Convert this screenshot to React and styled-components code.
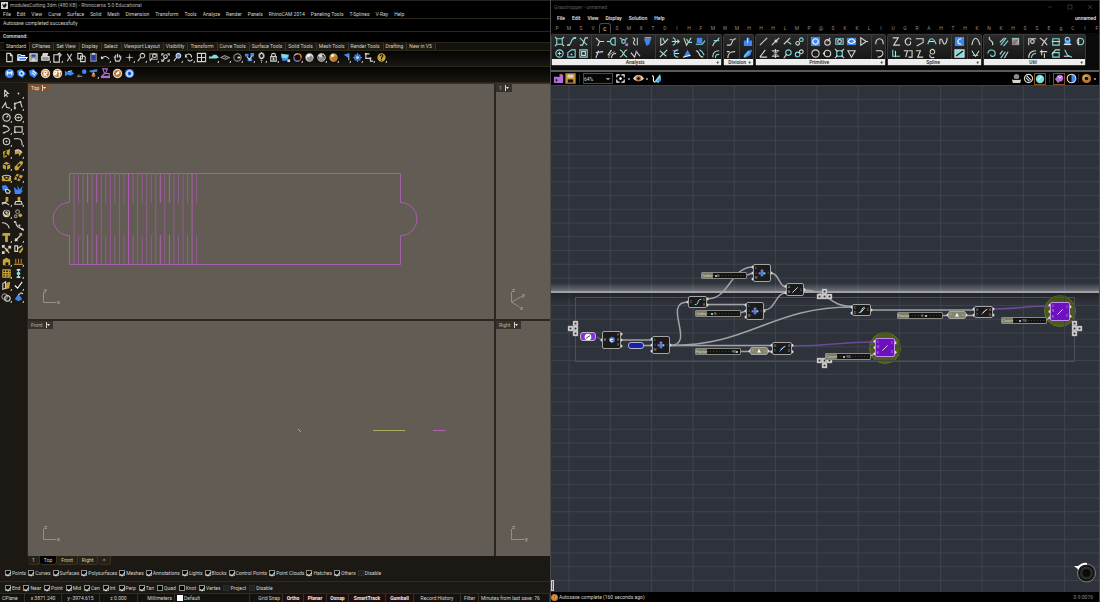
import styled, { createGlobalStyle } from "styled-components"

const GlobalStyle = createGlobalStyle`
  * { box-sizing: border-box; }
  body {
    margin: 0;
    background: #000;
    color: #d4d4d0;
    font-family: Roboto, "Open Sans", sans-serif;
    font-size: 5px;
    line-height: 8px;
  }
  button, select, input { font: inherit; color: inherit; }
  a { color: inherit; text-decoration: none; }
`

/* ---------- icons ---------- */

// first letter of every shape is its colour: lower case strokes, upper case fills
const colors = {
  w: "#d4d4d0",
  g: "#8c8c88",
  t: "#7fdede",
  b: "#3f86f0",
  n: "#2438b0",
  y: "#c8a438",
  o: "#c07838",
  p: "#b070e0",
  r: "#c8442c",
  k: "#101010",
  l: "#ffffff",
}

const o = (x, y, r) => `M${x - r} ${y}a${r} ${r} 0 1 0 ${2 * r} 0a${r} ${r} 0 1 0 ${-2 * r} 0`

const Svg = styled.svg`
  display: block;
  flex: none;
  overflow: visible;
`

function Icon({ shapes, size = 12, width = 1.2 }) {
  return (
    <Svg width={size} height={size} viewBox="0 0 12 12" aria-hidden="true">
      {shapes.map((shape, i) => {
        const code = shape[0]
        const filled = code !== code.toLowerCase()
        const color = colors[code.toLowerCase()]
        return (
          <path
            key={i}
            d={shape.slice(1)}
            fill={filled ? color : "none"}
            stroke={filled ? "none" : color}
            strokeWidth={width}
          />
        )
      })}
    </Svg>
  )
}

// little flyout mark in the lower right of a tool
const corner = "LM10 11.5h2v-2z"

const standardTools = [
  ["New", ["wM3 1.500h4l2 2.500v6.500h-6z", "wM7 1.500v2.500h2"]],
  ["Open", ["BM2 4h3l1 1h4v4h-8z", "lM2 9V3h3l1 1h4", "lM2 9l2-3h8l-2 3z"]],
  ["Save", ["GM2 2h8v8h-8z", "NM4 2h4v3h-4z", "wM2 2h8v8h-8z", "WM4 7h4v3h-4z"]],
  ["Print", ["WM3 1h6l-1 4h-6z", "GM1 5h9v4h-9z", "wM2 5h8v4h-8z", corner]],
  ["Properties", ["wM2 3h6v8h-6z", "wM6 3l2-2 2 2-2 3", corner]],
  ["Cut", ["wM3.500 2l5 8", "wM8.500 2l-5 8"]],
  ["Copy", ["wM2 1.500h4l1 1v5h-5z", "wM5 4.500h4l1 1v5h-5z"]],
  ["Paste", ["NM3 2h6v8h-6z", "gM3 2h6v8h-6z", "WM4.500 1h3v2h-3z"]],
  ["Undo", ["wM2 7c2-3 6-3 8 1", "WM1 8l0-4 3 3z", corner]],
  ["Pan", ["wM3 6l-1-1M4 6V3M6 6V2M8 6V3M9.500 7V4M3 6l1 4h4l1.500-3"]],
  ["Rotate", ["gM6 2v8M2 6h8", "WM5 5h2v2h-2z", corner]],
  ["Zoom", ["w" + o(7, 4, 2.5), "wM5 6l-3 4", corner]],
  ["Zoom window", ["gM2 2h8v6h-8z", "w" + o(7, 4, 2), "wM5 6l-3 4", corner]],
  ["Zoom extents", ["wM2 4V2h2M8 2h2v2M2 8v2h2M10 8v2h-2", "w" + o(6, 5, 2), "wM5 7l-2 3"]],
  ["Zoom selected", ["B" + o(7, 4, 3), "w" + o(7, 4, 2.5), "wM5 6l-3 4", corner]],
  ["Undo view", ["wM2 4c2-3 7-2 6 2M4 8c1 3 5 2 5 0", "WM1 2v4h3z", corner]],
  ["Viewports", ["wM1.500 1.500h9v9h-9zM6 1.500v9M1.500 6h9"]],
  ["Set view", ["TM1 5h3l2-2h3l3 3-3 1h-8z", corner]],
  ["CPlane", ["gM1 6l4-2 5 2-4 2z", "R" + o(6, 6, 1), corner]],
  ["Circle", ["g" + o(6, 6, 4), "WM6 5h3v2h-3z", corner]],
  ["Object snap", ["BM1 2h4v3h-4zM7 1h4v4h-4zM4 7h5v3h-5z", "wM3 5l4 4M9 4l-3 4", corner]],
  ["Light", ["g" + o(6, 4, 3), "wM4 3l2-2 2 2v2l-1 2h-2l-1-2zM5 9h2M5.500 11h1", corner]],
  ["Lock", ["wM4 5V3c0-2 4-2 4 0v2", "wM3 5h6v5h-6z", "WM5 6h2v3h-2z", corner]],
  ["Layers", ["BM1 5l9-1-2 5-5 1z", "TM1 2l9 1-3 4-5-1z", "WM8 8h3v3h-3z"]],
  ["Color wheel", ["r" + o(6, 6, 4), "bM2 6a4 4 0 0 0 6 3.500", "tM2.500 4a4 4 0 0 1 4-2", "yM7 2a4 4 0 0 1 3 4", corner]],
  ["Shade", ["W" + o(6, 6, 4.5), "G" + o(6.5, 7, 3), "L" + o(5, 4, 1.5)]],
  ["Render preview", ["w" + o(6, 6, 4), "G" + o(6, 7, 3), "W" + o(5, 4, 2), corner]],
  ["Render", ["Y" + o(6, 6, 4.5), "O" + o(7, 7, 3), "L" + o(5, 4, 1.5), corner]],
  ["Camera", ["BM4 3l6-2v6z", "WM10 1v8h-1z", corner]],
  ["Options", ["b" + o(6, 6, 3), "bM6 1v10M1 6h10M3 3l6 6M9 3l-6 6", "W" + o(6, 6, 1.5), corner]],
  ["Dimension", ["wM2 2h4M2 2v5h5v3h3", "WM1 1h2v2h-2zM6 6h2v2h-2z", corner]],
  ["Help", ["Y" + o(6, 6, 4.5), "kM4.500 4.500c0-2 3.500-2 3 0l-1.500 2v1M6 8.500v1", corner]],
]

const renderTools = [
  ["Material editor", ["B" + o(6, 6, 5), "lM3.500 8v-4l2.500 2 2.500-2v4"]],
  ["Options", ["BM1 3l5-2 5 5-4 5-5-3z", "l" + o(6, 6, 2), "N" + o(6, 6, 1)]],
  ["Frame buffer", ["BM1 3l5-2 5 5-4 5-5-3z", "lM4 5l4 3M5 3l4 3"]],
  ["Render", ["O" + o(6, 6, 5), "w" + o(6, 6, 4.5), "lM4.500 9V3.500h3v2.500h-3l3 3"]],
  ["Render real time", ["O" + o(6, 6, 5), "w" + o(6, 6, 4.5), "lM3 8V4h2v2h-2l2 2M6 4h4M8 4v5"]],
  ["Fish", ["BM1 3l3 2c2-2 5-1 7 1-2 2-5 3-7 1l-3 2z", "wM4 4l5-1"]],
  ["Sun", ["B" + o(9, 4, 2.5), "gM1 9h6M3 7v3"]],
  ["Light", ["BM1 3l9-2 0 3-7 1z", "O" + o(6, 8, 2), "WM5 5h2v2h-2z", corner]],
  ["Grass", ["pM3 1h5l-2 5h4v3h-8l3-3z", "PM1 9h10v2h-10z"]],
  ["Brush", ["O" + o(6, 6, 5), "w" + o(6, 6, 4.5), "LM4 8l1-3 3-2 0 3z"]],
  ["About", ["B" + o(6, 6, 5), "l" + o(6, 6, 3), "N" + o(6, 6, 1.5)]],
]

const sideTools = [
  ["Select", ["wM4 2v7l2-2 1 3M4 2l4 4h-2"]],
  ["Point", ["W" + o(6, 6, 1), corner]],
  ["Polyline", ["wM1 9l4-6 1 5 4 1", corner]],
  ["Control curve", ["wM2 9V4l6-2 2 6", "WM1 3h2v2h-2zM7 1h2v2h-2zM1 8h2v2h-2z", corner]],
  ["Circle", ["w" + o(6, 6, 4), "wM6 6l2-2", corner]],
  ["Ellipse", ["w" + o(6, 6, 3.5), "gM1 6h10", "W" + o(6, 6, 1), corner]],
  ["Arc", ["wM2 10c2-1 7-2 7-4s-3-4-6-4", "WM2 1h2v2h-2z", corner]],
  ["Rectangle", ["wM2 3h8v6h-8z", "WM1 8h2v2h-2z", corner]],
  ["Polygon", ["w" + o(6, 6, 3.5), "W" + o(6, 6, 1), corner]],
  ["Fillet", ["wM1 3h5c3 0 4 2 4 7", corner]],
  ["Surface", ["YM2 4l8-3-1 7-6 3z", "kM4 5l4 4M6 3l-2 6", corner]],
  ["Patch", ["YM2 3c4-2 6-1 8 2l-3 4-1-3-4 1z", "wM2 3c4-2 6-1 8 2", corner]],
  ["Box", ["YM2 4l4-2 4 2v5l-4 2-4-2z", "kM2 4l4 2 4-2M6 6v5", corner]],
  ["Pipe", ["yM2 8l6-6M5 10l5-6", "Y" + o(4, 9, 2.5), "Y" + o(9, 3, 2), corner]],
  ["Cylinder", ["YM1 5h10v5h-10z", "k" + o(6, 6, 2), "wM1 5c2-2 8-2 10 0", corner]],
  ["Plane", ["YM4 2l7 2-4 6-6-2z", "kM3 5l6 3M7 3l-3 6", corner]],
  ["Boolean", ["BM1 2l4-1 3 3-2 3-4 0z", "wM5 6l3 0 2 2-1 2-3 0-1-2z"]],
  ["Explode", ["BM2 11L1 3l4 4V1l2 5 4-4-2 5h2l-3 4z"]],
  ["Trim", ["YM5 1h3v5h-3z", "wM1 7l5 1 3 2M6 6l-5 3", corner]],
  ["Split", ["YM5 1h3v5h-3z", "wM2 9l1-3h6l1 3z", corner]],
  ["Group", ["W" + o(6, 6, 4), "k" + o(6, 5, 2), "YM6 6h3v3h-3z", corner]],
  ["Ungroup", ["g" + o(5, 4, 2), "g" + o(3, 9, 1.5), "Y" + o(8, 8, 2)]],
  ["Blend", ["wM1 3c4 0 7 2 8 6"]],
  ["Edit points", ["wM3 2c0 5 3 7 8 8", "WM1 1h2v2h-2zM6 5h2v2h-2zM9 9h2v2h-2z", corner]],
  ["Text", ["YM2 1h8v3h-2.500v7h-3v-7h-3.500z", corner]],
  ["Move", ["wM2 10l7-7", "YM7 1h3v3h-3z", "WM2 7h3v3h-3z", corner]],
  ["Array", ["WM1 1h3v3h-3zM8 2h3v3h-3zM1 8h3v3h-3z", "YM5 5h3v3h-3z", "wM4 4l5 6"]],
  ["Copy", ["wM2 2h3v6h-3z", "YM6 9l5-6 0 3-3 4z", "wM5 5l5-3"]],
  ["Solid edit", ["YM2 4l4-2 4 2v6h-8z", "KM5 7h3v3h-3z", corner]],
  ["Analyze", ["yM1 9h10", "oM3 3v5M6 3v5M9 3v5", corner]],
  ["Grid", ["yM2 2h8v8h-8zM5 2v8M8 2v8M2 5h8M2 7.500h8", corner]],
  ["Rebuild", ["tM6 1v10", "WM4 1h4v2h-4zM4 9h4v2h-4z", "T" + o(6, 6, 2), corner]],
  ["Block", ["wM2 4l3-2v7l-3 1z", "YM6 3l4-1-1 7-4 1z", corner]],
  ["Check", ["lM2 6l3 3 5-7", corner]],
  ["Hide", ["g" + o(4, 5, 3), "w" + o(7, 7, 3), corner]],
  ["Drop", ["BM6 2l4 6-4 2-4-2z", "wM6 3l3-2 2 1", corner]],
]

// ribbon: panel -> groups -> two rows of icons
const ribbon = [
  ["Analysis", [
    [[["tM3 3h6v6h-6z", "wM1 1l2 2M11 1l-2 2M1 11l2-2M11 11l-2-2"], ["tM2 10c6 0 1-8 9-8", "wM1 10h3M8 2h3"], ["tM2 2l8 8", "wM2 10h3l3-8h3"]],
     [["t" + o(6, 6, 4), "wM6 4v4M4 6h4"], ["tM2 5l4-3h4v8h-8z", "W" + o(6, 7, 1)], ["tM2 2h8v8h-8z", "wM4 4h4v4h-4z"]]],
    [[["wM2 2l4 4h5M6 6l-2 5"], ["wM1 6h4", "tM5 6c0-4 3-4 5-4v8c-2 0-5 0-5-4"], ["wM2 2l3 2M10 2l-2 2", "t" + o(6, 6, 2), "PM8 8h3v3h-3z"], ["wM3 2c6 2-3 5 3 8", "tM8 2v8"], ["BM2 3l8 0-2 6-3 2z", "wM3 2h7"]],
     [["wM2 11l3-8M2 5l8-1", "pM5 5h3"], ["gM3 11c0-4 2-6 7-7", "wM6 11c0-3 2-5 5-5M2 8l4-6"], ["tM2 2c5 2 3 6 8 8", "wM2 10c5-1 3-7 8-8"], ["wM1 5l4 5 2-6 4 5", "PM6 3h2v2h-2z"]]],
    [[["wM3 2v8c3 0 4-3 8-7", "tM5 2l3 6"], ["tM3 2c4 1 4 7 0 8", "wM2 6h8M8 4l2 2-2 2"], ["wM2 2l3 8 5-8", "tM5 3l2 4h4"], ["BM3 2h6v6h-6z", "tM2 9h7l3-4"]],
     [["wM2 10l8-8", "tM2 3l7 6"], ["pM3 3h5", "tM9 2c-6 0-6 8 0 8", "wM5 6h5"], ["BM6 2l4 7h-8z", "lM1 10l8-2"], ["wM2 3c5 0 2 7 8 7", "tM6 2c4 2 4 4 5 6"]]],
    [[["wM3 11c1-6 4-3 7-9", "tM4 5h6"]], [["wM3 10c0-5 2-7 7-7", "tM6 11c0-4 1-4 4-4"]]],
  ]],
  ["Division", [
    [[["wM1 10h3c4 0 1-7 7-7", "tM4 4h3"]], [["wM2 11c0-5 2-7 8-7M1 4h3"]]],
    [[["BM2 5h3v-3h3v3h3v6h-9z", "wM6 2v6"]], [["BM2 8l4-5 5-1-2 6-6 3z", "tM2 10l6-6"]]],
  ]],
  ["Primitive", [
    [[["wM2 10l8-8"], ["wM2 10l8-8", "WM5 4h3v3h-3z"], ["wM2 9l7-7", "tM6 6l4 3"], ["w" + o(4, 8, 2), "t" + o(8, 4, 2)]],
     [["wM2 10l6-8M2 10h8"], ["wM2 3h8M2 9h8M6 1v10", "gM3 3l6 6M9 3l-6 6"], ["t" + o(7, 5, 3), "wM5 7l-3 4"], ["t" + o(4, 7, 2.5), "w" + o(8, 4, 2)]]],
    [[["BM1 1h10v10h-10z", "l" + o(6, 6, 3)], ["wM9 2l-3 4", "w" + o(6, 7, 3)], ["tM2 3h8v6h-8z", "w" + o(6, 6, 2)], ["BM1 2h10v8h-10z", "lM2 6c3-4 5-4 8 0-3 3-5 3-8 0"], ["wM3 2v8l6-4zM9 6h2"]],
     [["w" + o(6, 6, 4)], ["w" + o(6, 6, 3.5), "WM1 5h2v2h-2z"], ["tM3 3h6v6h-6z", "wM1 1l3 3M8 8l3 3M11 1l-3 3M4 8l-3 3"], ["wM2 3h8l-4 7z"]]],
    [[["wM2 9c-1-8 9-8 8 0"]], [["wM2 3h5c4 0 4 7-3 7"]]],
  ]],
  ["Spline", [
    [[["wM3 2h6l-5 8h7"], ["wM10 4c-3-4-8 0-6 4s7 1 5-2"], ["wM2 3h8v4l-7 4"], ["tM2 9c2-8 6-8 9 0", "wM3 6h6"], ["wM2 9V4c3-3 3 5 5 5s3-5 3-7"]],
     [["tM3 2v7h8", "wM6 3v7"], ["wM2 3h4l-2 7M7 3h4v7h-4"], ["wM2 3h5l-3 7h6"], ["w" + o(7, 4, 2.5), "wM4 7c0 4 3 4 5 3"]]],
    [[["BM1 1h10v10h-10z", "lM8 3c-5 0-5 6 0 6"]], [["TM1 2h10v8h-10z", "kM2 9l8-6", "wM1 2h10v8h-10z"]]],
    [[["wM2 10c2-10 6-10 9 0"]], [["wM2 3l4 6 4-6", "tM3 8h6"]]],
  ]],
  ["Util", [
    [[["wM4 1c-3 4 6 4 3 9"], ["tM3 10l6-8M6 11l5-6", "wM2 7l5-5"], ["GM2 2h8v8h-8z", "rM3 9l7-7", "tM2 3h7v6"]],
     [["tM2 6c1-6 8-4 8 0s-5 4-5 1"], ["tM3 11l5-7", "wM7 11l4-7M2 7l3-4"]]],
    [[["wM3 10V3h8", "w" + o(7, 6, 2)], ["wM2 2l5 4-3 5M10 2l-3 4 3 4"], ["tM3 3h7v7h-7z", "wM2 6h9"], ["BM3 4h6v6h-6z", "t" + o(6, 4, 2.5), "lM2 9h8"], ["t" + o(7, 6, 3.5), "wM5 2v8"]],
     [["wM3 11c0-5 2-8 8-8", "tM6 11c0-3 2-5 5-5"], ["wM2 4h8M4 2v6M7 6v5"], ["tM3 5h7v5h-7z", "wM2 7l4-5h5"], ["tM3 2l3 6 5 2", "wM2 9h6"]]],
  ]],
]

/* ---------- shared controls ---------- */

const Screen = styled.div`
  display: grid;
  grid-template-columns: minmax(0, 1fr) minmax(0, 1fr);
  min-height: 100vh;
`

const Pane = styled.section`
  display: flex;
  flex-direction: column;
  min-width: 0;
  overflow: hidden;
  white-space: nowrap;
`

const TitleBar = styled.header`
  display: flex;
  align-items: center;
  gap: 2px;
  height: ${p => p.$height}px;
  padding: 0 ${p => p.$pad}px;
  border-top: 1px solid #242422;
  color: ${p => p.$dim ? "#5c5c5c" : "#b4b4b0"};
`

const MenuBar = styled.nav`
  display: flex;
  align-items: center;
  gap: 6px;
  height: 9px;
  padding: 0 3px;
`

const IconButton = styled.button`
  display: flex;
  align-items: center;
  justify-content: center;
  flex: none;
  width: 12px;
  height: 12px;
  padding: 0;
  border: ${p => p.$active ? "1px solid #8a4a1c" : "0"};
  background: none;
`

function Tools({ tools, size = 11 }) {
  return tools.map(([name, shapes]) => (
    <IconButton key={name} type="button" aria-label={name}>
      <Icon shapes={shapes} size={size} />
    </IconButton>
  ))
}

/* ---------- modelling window ---------- */

const CommandLine = styled.div`
  height: ${p => p.$height}px;
  padding: 0 3px;
  border-top: 1px solid #2a261c;
  font-weight: ${p => p.$bold ? 600 : 400};
`

const TabStrip = styled.div`
  display: flex;
  align-items: flex-end;
  height: 9px;
  padding-left: 4px;
  border-top: 1px solid #2a261c;
  border-bottom: 1px solid #2c271b;
  background: #14120d;
`

const Tab = styled.button`
  height: 8px;
  padding: 0 3px 0 2px;
  border: 0;
  border-right: 1px solid #3c3421;
  border-radius: 0 3px 0 0;
  background: ${p => p.$active ? "#060604" : "#1e1a11"};
  line-height: 8px;
`

const ToolRow = styled.div`
  display: flex;
  align-items: flex-start;
  height: 16px;
  padding: 0 3px;
  border-bottom: 1px solid #2a261c;
  background: linear-gradient(#050504, #191711);
`

const Workspace = styled.div`
  display: grid;
  grid-template-columns: 27px minmax(0, 1fr);
  flex: 1;
  background: #1c1914;
`

const SideBar = styled.aside`
  display: grid;
  grid-template-columns: 12px 12px;
  align-content: start;
  padding-top: 4px;
`

const Viewports = styled.div`
  display: grid;
  grid-template-columns: minmax(0, 466fr) minmax(0, 54fr);
  grid-template-rows: 1fr 1fr;
  gap: 2px;
  padding-left: 1px;
  border-top: 1px solid #38342c;
  background: #2b2720;
`

const View = styled.div`
  position: relative;
  display: flex;
  flex-direction: column;
  justify-content: space-between;
  align-items: flex-start;
  background: #635c55;
`

const ViewLabel = styled.button`
  position: relative;
  display: flex;
  align-items: center;
  gap: 3px;
  height: 8px;
  padding: 0 3px;
  border: 0;
  background: ${p => p.$active ? "#7c5230" : "#37332c"};
  color: ${p => p.$active ? "#f0e8dc" : "#b4b0a8"};
`

const Drawing = styled.svg`
  position: absolute;
  inset: 0;
  width: 100%;
  height: 100%;
`

function DownArrow() {
  return (
    <Svg width="4" height="6" viewBox="0 0 4 6" aria-hidden="true">
      <path d="M.5 0v6" stroke="#d8d4cc" />
      <path d="M1 2h3l-1.500 2z" fill="#f4f0e8" />
    </Svg>
  )
}

function Axis({ up, right }) {
  return (
    <Svg width="38" height="34" viewBox="0 0 38 34" fontSize="6" fill="#b8b3ac">
      <path d="M15.500 7v10.500h13" fill="none" stroke="#958f88" />
      <text x="16" y="7">{up}</text>
      <text x="29" y="19">{right}</text>
    </Svg>
  )
}

function PerspectiveAxis() {
  return (
    <Svg width="38" height="34" viewBox="0 0 38 34" fontSize="6" fill="#b8b3ac">
      <path d="M15.500 7v10l8 5M15.500 17l11-6" fill="none" stroke="#958f88" />
      <text x="16" y="7">z</text>
      <text x="26" y="12">y</text>
      <text x="24" y="25">x</text>
    </Svg>
  )
}

function Viewport({ name, active, axis, children }) {
  return (
    <View>
      {children}
      <ViewLabel type="button" $active={active}>
        {name}
        <DownArrow />
      </ViewLabel>
      {axis}
    </View>
  )
}

function CutSheet() {
  const bright = [4, 6, 13, 20, 22, 27]
  return (
    <Drawing fill="none" stroke="#a65fa8">
      <path d="M41.500 118.500V89.500H372.500V118.500A16 16 0 0 1 372.500 151.500V180.500H41.500V151.500A16 16 0 0 1 41.500 118.500Z" />
      {Array.from({ length: 28 }, (_, i) => i + 1).map(k => {
        const x = 41.5 + k * 4.54
        const d = k % 2 ? `M${x} 89V180` : `M${x} 89V119M${x} 151V180`
        return <path key={k} d={d} stroke={bright.includes(k) ? "#b25fb4" : "#925d90"} />
      })}
    </Drawing>
  )
}

const ViewTabs = styled.div`
  display: flex;
  height: 9px;
  padding-left: 28px;
  background: #1c1914;
`

const ViewTab = styled.button`
  height: 9px;
  padding: 0 4px;
  border: solid #3a3322;
  border-width: 0 1px 1px 0;
  border-radius: 0 0 3px 3px;
  background: ${p => p.$active ? "#000" : "#262117"};
  color: ${p => p.$active ? "#dcdcd4" : "#d8cf9c"};
`

const CheckRow = styled.div`
  display: flex;
  align-items: center;
  gap: ${p => p.$gap}px;
  height: ${p => p.$height}px;
  padding: 0 5px;
  border-bottom: 1px solid #2f2b22;
  background: #1c1914;
`

const CheckLabel = styled.label`
  display: flex;
  align-items: center;
  gap: 1px;
`

const CheckBox = styled.input`
  appearance: none;
  width: 6px;
  height: 6px;
  margin: 0;
  border: 1px solid ${p => p.disabled ? "#2c2c2c" : "#8c8c88"};
  background: ${p => p.disabled ? "#222" : "#050505"};

  &:checked::after {
    content: "";
    display: block;
    width: 2px;
    height: 4px;
    margin-left: 1px;
    border: solid #d8d8d4;
    border-width: 0 1px 1px 0;
    transform: rotate(40deg);
  }
`

function Check({ name, on = true, off }) {
  return (
    <CheckLabel>
      <CheckBox type="checkbox" defaultChecked={on && !off} disabled={off} />
      {name}
    </CheckLabel>
  )
}

const StatusBar = styled.footer`
  display: grid;
  grid-template-columns: 25fr 37fr 38fr 38fr 37fr 75fr 33fr 21fr 23fr 22fr 37fr 28fr 47fr 18fr 71fr;
  height: 8px;
  background: #14120e;
`

const StatusCell = styled.span`
  display: flex;
  align-items: center;
  justify-content: ${p => p.$start ? "flex-start" : p.$end ? "flex-end" : "center"};
  gap: 1px;
  min-width: 0;
  padding: 0 2px;
  border-right: 1px solid #353028;
  background: ${p => p.$on ? "#200c0a" : "none"};
  color: ${p => p.$on ? "#f0ece8" : "inherit"};
  font-weight: ${p => p.$on ? 700 : 400};
`

const Swatch = styled.i`
  width: 6px;
  height: 6px;
  background: #fff;
`

const rhinoMenu = ["File", "Edit", "View", "Curve", "Surface", "Solid", "Mesh", "Dimension", "Transform", "Tools", "Analyze", "Render", "Panels", "RhinoCAM 2014", "Paneling Tools", "T-Splines", "V-Ray", "Help"]
const toolTabs = ["Standard", "CPlanes", "Set View", "Display", "Select", "Viewport Layout", "Visibility", "Transform", "Curve Tools", "Surface Tools", "Solid Tools", "Mesh Tools", "Render Tools", "Drafting", "New in V5"]
const filters = ["Points", "Curves", "Surfaces", "Polysurfaces", "Meshes", "Annotations", "Lights", "Blocks", "Control Points", "Point Clouds", "Hatches", "Others"]
const snaps = ["End", "Near", "Point", "Mid", "Cen", "Int", "Perp", "Tan"]

function Rhino() {
  return (
    <Pane>
      <TitleBar $height={9} $pad={1}>
        <Icon size={7} shapes={["WM0 0h12v12h-12z", "KM2 3l3 2 3-3 2 3-3 5-3-1z"]} />
        modulesCutting.3dm (480 KB) - Rhinoceros 5.0 Educational
      </TitleBar>
      <MenuBar>
        {rhinoMenu.map(item => <a key={item} href="#menu">{item}</a>)}
      </MenuBar>
      <CommandLine $height={13}>Autosave completed successfully</CommandLine>
      <CommandLine $height={11} $bold>Command:</CommandLine>
      <TabStrip>
        {toolTabs.map(tab => <Tab key={tab} type="button" $active={tab === "Standard"}>{tab}</Tab>)}
      </TabStrip>
      <ToolRow><Tools tools={standardTools} /></ToolRow>
      <ToolRow><Tools tools={renderTools} /></ToolRow>
      <Workspace>
        <SideBar><Tools tools={sideTools} /></SideBar>
        <Viewports>
          <Viewport name="Top" active axis={<Axis up="y" right="x" />}>
            <CutSheet />
          </Viewport>
          <Viewport name="1" axis={<PerspectiveAxis />} />
          <Viewport name="Front" axis={<Axis up="z" right="x" />}>
            <Drawing>
              <path d="M270 108l3 3" stroke="#a8a89c" />
              <path d="M345 109.500h32" stroke="#a8b060" />
              <path d="M405 109.500h13" stroke="#b45cb4" />
            </Drawing>
          </Viewport>
          <Viewport name="Right" axis={<Axis up="z" right="y" />} />
        </Viewports>
      </Workspace>
      <ViewTabs>
        {["1", "Top", "Front", "Right", "✧"].map(tab => (
          <ViewTab key={tab} type="button" $active={tab === "Top"}>{tab}</ViewTab>
        ))}
      </ViewTabs>
      <CheckRow $height={17} $gap={2}>
        {filters.map(name => <Check key={name} name={name} />)}
        <Check name="Disable" off />
      </CheckRow>
      <CheckRow $height={12} $gap={3}>
        {snaps.map(name => <Check key={name} name={name} />)}
        <Check name="Quad" on={false} />
        <Check name="Knot" on={false} />
        <Check name="Vertex" />
        <Check name="Project" off />
        <Check name="Disable" off />
      </CheckRow>
      <StatusBar>
        <StatusCell $start>CPlane</StatusCell>
        <StatusCell>x 3871.240</StatusCell>
        <StatusCell>y -3974.615</StatusCell>
        <StatusCell>z 0.000</StatusCell>
        <StatusCell $end>Millimeters</StatusCell>
        <StatusCell $start><Swatch />Default</StatusCell>
        <StatusCell $end>Grid Snap</StatusCell>
        <StatusCell $on>Ortho</StatusCell>
        <StatusCell $on>Planar</StatusCell>
        <StatusCell $on>Osnap</StatusCell>
        <StatusCell $on>SmartTrack</StatusCell>
        <StatusCell $on>Gumball</StatusCell>
        <StatusCell>Record History</StatusCell>
        <StatusCell>Filter</StatusCell>
        <StatusCell $start>Minutes from last save: 76</StatusCell>
      </StatusBar>
    </Pane>
  )
}

/* ---------- graph editor window ---------- */

const GraphPane = styled(Pane)`
  border: solid #4a4a4a;
  border-width: 0 1px;
`

const WindowButtons = styled.div`
  display: flex;
  gap: 8px;
  margin-left: auto;
`

const GraphMenu = styled.nav`
  display: flex;
  align-items: center;
  gap: 7px;
  height: 11px;
  padding: 0 3px 0 6px;
  color: #e8e8e8;
  font-weight: 500;
`

const FileName = styled.span`
  margin-left: auto;
`

const LetterTabs = styled.div`
  display: flex;
  height: 10px;
  overflow: hidden;
`

const LetterTab = styled.button`
  flex: none;
  width: 12px;
  height: 10px;
  padding: 0;
  border: ${p => p.$active ? "1px solid #4a4a4a" : "0"};
  border-bottom: 0;
  border-radius: 3px 3px 0 0;
  background: none;
  color: ${p => p.$active ? "#eee" : "#8a8a8a"};
`

const Ribbon = styled.div`
  display: flex;
  gap: 1px;
  height: 39px;
  padding-top: 1px;
  border-bottom: 2px solid #5a5a5a;
  background: #0a0a0a;
`

const RibbonPanel = styled.fieldset`
  display: flex;
  flex-direction: column;
  justify-content: space-between;
  height: 32px;
  min-width: 0;
  margin: 0;
  padding: 0;
  border: 1px solid #3a3a3a;
  border-radius: 2px;
  background: linear-gradient(#2b2b2b, #121212);
`

const RibbonGroups = styled.div`
  display: flex;
`

const RibbonGroup = styled.div`
  padding: 0 2px 0 1px;
  border-right: 1px solid #3c3c3c;

  &:last-child { border: 0; padding-right: 0; }
`

const RibbonRow = styled.div`
  display: flex;
`

const Caption = styled.div`
  display: flex;
  justify-content: space-between;
  padding: 0 2px;
  background: #eee;
  color: #222;
  font-weight: 500;
  line-height: 6px;
`

const CanvasBar = styled.div`
  display: flex;
  align-items: center;
  height: 13px;
  padding: 0 1px;
`

const BarGap = styled.i`
  width: 1px;
  height: 9px;
  margin: 0 ${p => p.$tight ? 1 : 3}px;
  background: #2c2c2c;
`

const Spacer = styled.div`
  flex: 1;
`

const Zoom = styled.select`
  width: 30px;
  height: 11px;
  margin-right: 1px;
  padding: 0;
  border: 1px solid #4a4a4a;
  appearance: none;
  background:
    linear-gradient(45deg, transparent 50%, #888 50%) right 4px center / 2px 2px no-repeat,
    linear-gradient(-45deg, transparent 50%, #888 50%) right 2px center / 2px 2px no-repeat,
    #060606;
  color: #d8d8d8;
`

const Dot = styled.i`
  width: 2px;
  height: 2px;
  margin: 0 2px;
  border-radius: 1px;
  background: #aaa;
`

const Canvas = styled.main`
  position: relative;
  flex: 1;
  overflow: hidden;
  background: #2e323b;
  line-height: 6px;
`

const Placed = styled.div`
  position: absolute;
  left: ${p => p.$x}px;
  top: ${p => p.$y}px;
`

const NodeBox = styled(Placed)`
  display: grid;
  grid-template-columns: 4px 1fr 4px;
  align-items: center;
  width: ${p => p.$w}px;
  height: ${p => p.$h}px;
  border: 1px solid ${p => p.$selected ? "#c58cf0" : "#a4a4a4"};
  border-radius: 2px;
  background: ${p => p.$selected ? "#6d10c0" : p.$tan ? "#85856a" : "#1b1b1b"};
  color: #b8b8b8;
  font-size: 3px;
`

const Ports = styled.div`
  display: flex;
  flex-direction: column;
  justify-content: space-around;
  align-self: stretch;
  align-items: center;
  line-height: 4px;
`

const NodeIcon = styled.div`
  display: flex;
  justify-content: center;
`

const Pill = styled(Placed)`
  display: flex;
  align-items: center;
  justify-content: center;
  width: ${p => p.$w}px;
  height: ${p => p.$h}px;
  border: 1px solid #b8b8c4;
  border-radius: 3px;
  background: ${p => p.$color};
`

const SliderBox = styled(Placed)`
  display: flex;
  width: 46px;
  height: 7px;
  border: 1px solid #8a8a84;
  border-radius: 1px;
  background: #141414;
  font-size: 4px;
  line-height: 5px;
`

const SliderLabel = styled.label`
  flex: none;
  width: 11px;
  background: #7c7c66;
  color: #d4d4c0;
  text-align: center;
`

const Range = styled.input`
  flex: 1;
  min-width: 0;
  height: 5px;
  margin: 0;
  appearance: none;
  background: repeating-linear-gradient(90deg, #3c3c3c 0 1px, transparent 1px 3px) center / 100% 1px no-repeat;

  &::-webkit-slider-thumb {
    appearance: none;
    width: 2px;
    height: 2px;
    border-radius: 1px;
    background: #ddd;
  }
`

const SliderValue = styled.output`
  position: absolute;
  left: ${p => p.$left}px;
  top: 0;
  color: #ccc;
`

const Halo = styled(Placed)`
  width: 32px;
  height: 32px;
  border: 1px solid #5d7222;
  border-radius: 50%;
  background: #4a5c18;
`

const GraphStatus = styled.footer`
  display: flex;
  align-items: center;
  gap: 1px;
  height: 10px;
  padding: 0 6px 0 0;
  color: #d4d4d4;
`

const Version = styled.span`
  margin-left: auto;
  color: #8a8a8a;
`

const ScrollThumb = styled(Placed)`
  width: 3px;
  height: 11px;
  border: 1px solid #d0d0d0;
  background: #666;
`

const glyphs = {
  tree: ["BM4 4h4v7h-4z", "PM1 5h3v3h-3z", "TM8 5h3v3h-3z", "PM4 1h4v3h-4z"],
  brep: ["BM2 3l4-2 4 2v5l-4 3-4-3z", "lM3 5h4v3h-3z", "RM6 6h2v2h-2z"],
  curve: ["tM1 10c8 0 2-8 10-8"],
  line: ["wM2 10l8-8"],
  wave: ["tM1 10l3-1 3-6 3-1", "wM4 10l6-7"],
  divide: ["bM2 10l8-8", "lM4 7l3-2", "wM7 4l4-2"],
  factor: ["lM6 2v3", "LM6 3l4 6h-8z"],
}

const nodes = [
  { x: 51, y: 246, w: 19, h: 18, icon: "brep", ins: "B", outs: "FEV" },
  { x: 101, y: 251, w: 18, h: 18, icon: "tree", ins: "LiW", outs: "i" },
  { x: 137, y: 211, w: 19, h: 12, icon: "curve", ins: "C", outs: "SE" },
  { x: 202, y: 179, w: 18, h: 18, icon: "tree", ins: "LiW", outs: "i" },
  { x: 195, y: 217, w: 18, h: 18, icon: "tree", ins: "LiW", outs: "i" },
  { x: 235, y: 198, w: 18, h: 13, icon: "line", ins: "AB", outs: "L" },
  { x: 301, y: 219, w: 19, h: 12, icon: "wave", ins: "CD", outs: "C" },
  { x: 199, y: 262, w: 18, h: 8, icon: "factor", ins: "F", outs: "y", tan: true },
  { x: 221, y: 257, w: 20, h: 13, icon: "divide", ins: "GT", outs: "GX" },
  { x: 397, y: 226, w: 18, h: 8, icon: "factor", ins: "F", outs: "y", tan: true },
  { x: 423, y: 221, w: 19, h: 12, icon: "divide", ins: "GT", outs: "GX" },
  { x: 324, y: 253, w: 20, h: 19, icon: "line", ins: "CNK", outs: "CX", selected: true },
  { x: 499, y: 217, w: 20, h: 19, icon: "line", ins: "CNK", outs: "CX", selected: true },
]

const sliders = [
  { id: "index-a", name: "Index", x: 150, y: 187, value: "5", at: 5, left: 15 },
  { id: "index-b", name: "Index", x: 144, y: 225, value: "5", at: 12, left: 18 },
  { id: "factor-a", name: "Factor", x: 144, y: 263, value: "90", at: 94, left: 36 },
  { id: "count-a", name: "Count", x: 274, y: 268, value: "10", at: 18, left: 20 },
  { id: "factor-b", name: "Factor", x: 346, y: 227, value: "5", at: 50, left: 23 },
  { id: "count-b", name: "Count", x: 450, y: 232, value: "10", at: 18, left: 20 },
]

const wires = [
  "M70 255H101",
  "M92 260.500H101",
  "M119 260.500C146 260.500 110 217 137 217",
  "M119 260.500C200 260.500 220 222 301 222",
  "M119 260.500H221",
  "M156 214C179 214 179 182 202 182",
  "M156 219.500H195",
  "M196 190L202 188",
  "M189 228L195 226",
  "M220 188C228 188 228 202 235 202",
  "M213 225C225 225 224 208 235 208",
  "M253 205C278 205 277 221.500 301 221.500",
  "M320 225H423",
  "M190 266.500H199",
  "M217 266.500H221",
  "M320 271L324 268",
  "M392 230.500H397",
  "M415 230.500H423",
  "M496 235L500 231",
]

const purpleWires = ["M46 252L51 255", "M241 261C283 261 283 257 324 257", "M442 224C471 224 471 221 499 221"]

function Node({ x, y, w, h, icon, ins, outs, tan, selected }) {
  return (
    <NodeBox $x={x} $y={y} $w={w} $h={h} $tan={tan} $selected={selected}>
      <Ports>{[...ins].map(port => <span key={port}>{port}</span>)}</Ports>
      <NodeIcon><Icon shapes={glyphs[icon]} size={tan ? 6 : 8} width={1.5} /></NodeIcon>
      <Ports>{[...outs].map(port => <span key={port}>{port}</span>)}</Ports>
    </NodeBox>
  )
}

function Slider({ id, name, x, y, value, at, left }) {
  return (
    <SliderBox $x={x} $y={y}>
      <SliderLabel htmlFor={id}>{name}</SliderLabel>
      <Range id={id} type="range" defaultValue={at} />
      <SliderValue htmlFor={id} $left={left}>{value}</SliderValue>
    </SliderBox>
  )
}

function Nubs({ cells }) {
  return cells.map(([x, y]) => (
    <g key={`${x} ${y}`}>
      <rect x={x} y={y} width="5" height="5" fill="#e4e4e4" stroke="#8a8a8a" strokeWidth=".5" />
      <rect x={x + 1.5} y={y + 1.5} width="2" height="2" fill="#333" />
    </g>
  ))
}

function Wiring() {
  const ports = nodes.flatMap(({ x, y, w, h, ins, outs }) => [
    ...[...ins].map((_, i) => [x, y + (h * (i + 0.5)) / ins.length]),
    ...[...outs].map((_, i) => [x + w, y + (h * (i + 0.5)) / outs.length]),
  ])
  return (
    <Drawing>
      <defs>
        <pattern id="grid" x="17.500" width="41.300" height="13.750" patternUnits="userSpaceOnUse">
          <path d="M.5 0V14M0 .5H42" stroke="#3d424b" />
        </pattern>
        <linearGradient id="glow" x2="0" y2="1">
          <stop offset="0" stopColor="#fff" stopOpacity="0" />
          <stop offset="1" stopColor="#fff" stopOpacity=".3" />
        </linearGradient>
        <linearGradient id="shade" x2="0" y2="1">
          <stop offset="0" stopOpacity=".3" />
          <stop offset="1" stopOpacity="0" />
        </linearGradient>
      </defs>
      <rect width="100%" height="100%" fill="url(#grid)" />
      <rect y="198" width="100%" height="8" fill="url(#glow)" />
      <rect y="206" width="100%" height="2" fill="#a0a2a4" />
      <rect y="208" width="100%" height="10" fill="url(#shade)" />
      <rect x="24.500" y="212.500" width="499" height="64" fill="none" stroke="#4c5058" />
      <g fill="none" stroke="#a0a2a6" strokeWidth="1.500">
        {wires.map(d => <path key={d} d={d} />)}
      </g>
      <g fill="none" stroke="#6c4a98" strokeWidth="1.500">
        {purpleWires.map(d => <path key={d} d={d} />)}
      </g>
      <g fill="#dcdcdc">
        {ports.map(([x, y]) => <circle key={`${x} ${y}`} cx={x} cy={y} r="1.500" />)}
      </g>
      <Nubs cells={[[22, 236], [22, 241], [17, 241], [22, 246]]} />
      <Nubs cells={[[271, 204], [266, 209], [271, 209], [276, 209]]} />
      <Nubs cells={[[266, 273], [271, 273], [276, 273], [271, 278]]} />
      <Nubs cells={[[521, 236], [521, 241], [526, 241], [521, 246]]} />
    </Drawing>
  )
}

const CompassBox = styled.div`
  position: absolute;
  right: 2px;
  bottom: 9px;
`

function Compass() {
  return (
    <CompassBox>
      <Svg width="22" height="22" viewBox="0 0 22 22" aria-hidden="true">
        <circle cx="11.500" cy="12" r="9" fill="#1a1a1a" stroke="#7c7c7c" />
        <circle cx="11.500" cy="12" r="7" fill="#2c2c2c" stroke="#101010" />
        <circle cx="11.500" cy="12" r="4" fill="#0c0c0c" />
        <path d="M3 7C6 3 9 2.500 12 3" fill="none" stroke="#fff" strokeWidth="2" />
        <path d="M-1 5l5 0 0 4z" fill="#fff" />
      </Svg>
    </CompassBox>
  )
}

function Panel({ title, groups }) {
  return (
    <RibbonPanel aria-label={title}>
      <RibbonGroups>
        {groups.map((rows, g) => (
          <RibbonGroup key={g}>
            {rows.map((row, r) => (
              <RibbonRow key={r}>
                <Tools tools={row.map((shapes, i) => [`${title} ${g}${r}${i}`, shapes])} />
              </RibbonRow>
            ))}
          </RibbonGroup>
        ))}
      </RibbonGroups>
      <Caption><span /><span>{title}</span><span>+</span></Caption>
    </RibbonPanel>
  )
}

function Grasshopper() {
  return (
    <GraphPane>
      <TitleBar $height={12} $pad={3} $dim>
        Grasshopper - unnamed
        <WindowButtons>
          {["M3 6h6", "M3 3h6v6h-6z", "M3 3l6 6M9 3l-6 6"].map((d, i) => (
            <IconButton key={d} type="button" aria-label={["Minimize", "Maximize", "Close"][i]}>
              <Icon shapes={["g" + d]} size={8} width={0.5} />
            </IconButton>
          ))}
        </WindowButtons>
      </TitleBar>
      <GraphMenu>
        {["File", "Edit", "View", "Display", "Solution", "Help"].map(item => <a key={item} href="#menu">{item}</a>)}
        <FileName>unnamed</FileName>
      </GraphMenu>
      <LetterTabs>
        {[..."PMSVCSMXTDIHFMWMHHHLMP@SKKLIUGRAHTHKNKHSSEgCIF"].map((letter, i) => (
          <LetterTab key={i} type="button" $active={i === 4}>{letter}</LetterTab>
        ))}
      </LetterTabs>
      <Ribbon>
        {ribbon.map(([title, groups]) => <Panel key={title} title={title} groups={groups} />)}
      </Ribbon>
      <CanvasBar>
        <Tools tools={[
          ["Open", ["PM1 4h6l2-2h2v9h-10z", "OM7 1h3v2h-3z", "KM3 6l2 2-2 2z"]],
          ["Save", ["YM1 1h10v10h-10z", "WM3 1h6v4h-6z", "KM3 7h6v4h-6z", "oM1 1h10v10h-10z"]],
        ]} />
        <BarGap />
        <Zoom aria-label="Zoom" defaultValue="64%"><option>64%</option><option>100%</option></Zoom>
        <Tools tools={[["Zoom extents", ["lM2 5V2h3M7 2h3v3M2 7v3h3M10 7v3h-3", "L" + o(6, 6, 1.5)]]]} />
        <Dot />
        <Tools tools={[["Named views", ["WM0 6c3-5 9-5 12 0-3 4-9 4-12 0", "O" + o(6, 6, 3), "K" + o(6, 6, 1.5)]]]} />
        <Dot />
        <Tools tools={[["Sketch", ["lM1 3c4 0-1 7 4 7", "TM4 9l6-8 1 6-3 4z", "BM6 9l4-4 1 4z"]]]} />
        <Spacer />
        <Tools tools={[
          ["No preview", ["G" + o(6, 4, 3), "WM1 7h10l-1 4h-8z", "kM2 7h8"]],
          ["Wireframe preview", ["w" + o(6, 6, 4.5), "wM4 3l5 5M3 5l4 4"]],
        ]} />
        <IconButton type="button" aria-label="Shaded preview" $active>
          <Icon size={10} shapes={["T" + o(6, 6, 5), "lM4 7l4-4"]} />
        </IconButton>
        <BarGap />
        <IconButton type="button" aria-label="Selected preview" $active>
          <Icon size={10} shapes={["GM1 6l4-4 3 5-3 4z", "P" + o(7, 5, 4), "lM5 3l2 2 2-2"]} />
        </IconButton>
        <Tools tools={[["Preview settings", ["B" + o(6, 6, 5), "KM6 1a5 5 0 0 0 0 10z", "w" + o(6, 6, 4.7)]]]} />
        <BarGap $tight />
        <Tools tools={[["Mesh quality", ["O" + o(6, 6, 5), "Y" + o(5, 5, 3), "K" + o(6, 6, 2)]]]} />
        <Dot />
      </CanvasBar>
      <Canvas>
        <Halo $x={318} $y={247} />
        <Halo $x={493} $y={210} />
        <Wiring />
        <Pill $x={29} $y={247} $w={16} $h={9} $color="#8c2ce0">
          <Icon size={8} shapes={["L" + o(6, 6, 5), "kM3 8l6-4"]} />
        </Pill>
        <Pill $x={77} $y={257} $w={16} $h={7} $color="#1420b0" />
        {sliders.map(slider => <Slider key={slider.id} {...slider} />)}
        {nodes.map(node => <Node key={`${node.x} ${node.y}`} {...node} />)}
        <ScrollThumb $x={0} $y={495} />
        <Compass />
      </Canvas>
      <GraphStatus>
        <Icon size={7} shapes={["O" + o(6, 6, 6), "Y" + o(6, 6, 4), "rM6 3v6"]} />
        Autosave complete (160 seconds ago)
        <Version>0.9.0076</Version>
      </GraphStatus>
    </GraphPane>
  )
}

export default function App() {
  return (
    <>
      <GlobalStyle />
      <Screen>
        <Rhino />
        <Grasshopper />
      </Screen>
    </>
  )
}
